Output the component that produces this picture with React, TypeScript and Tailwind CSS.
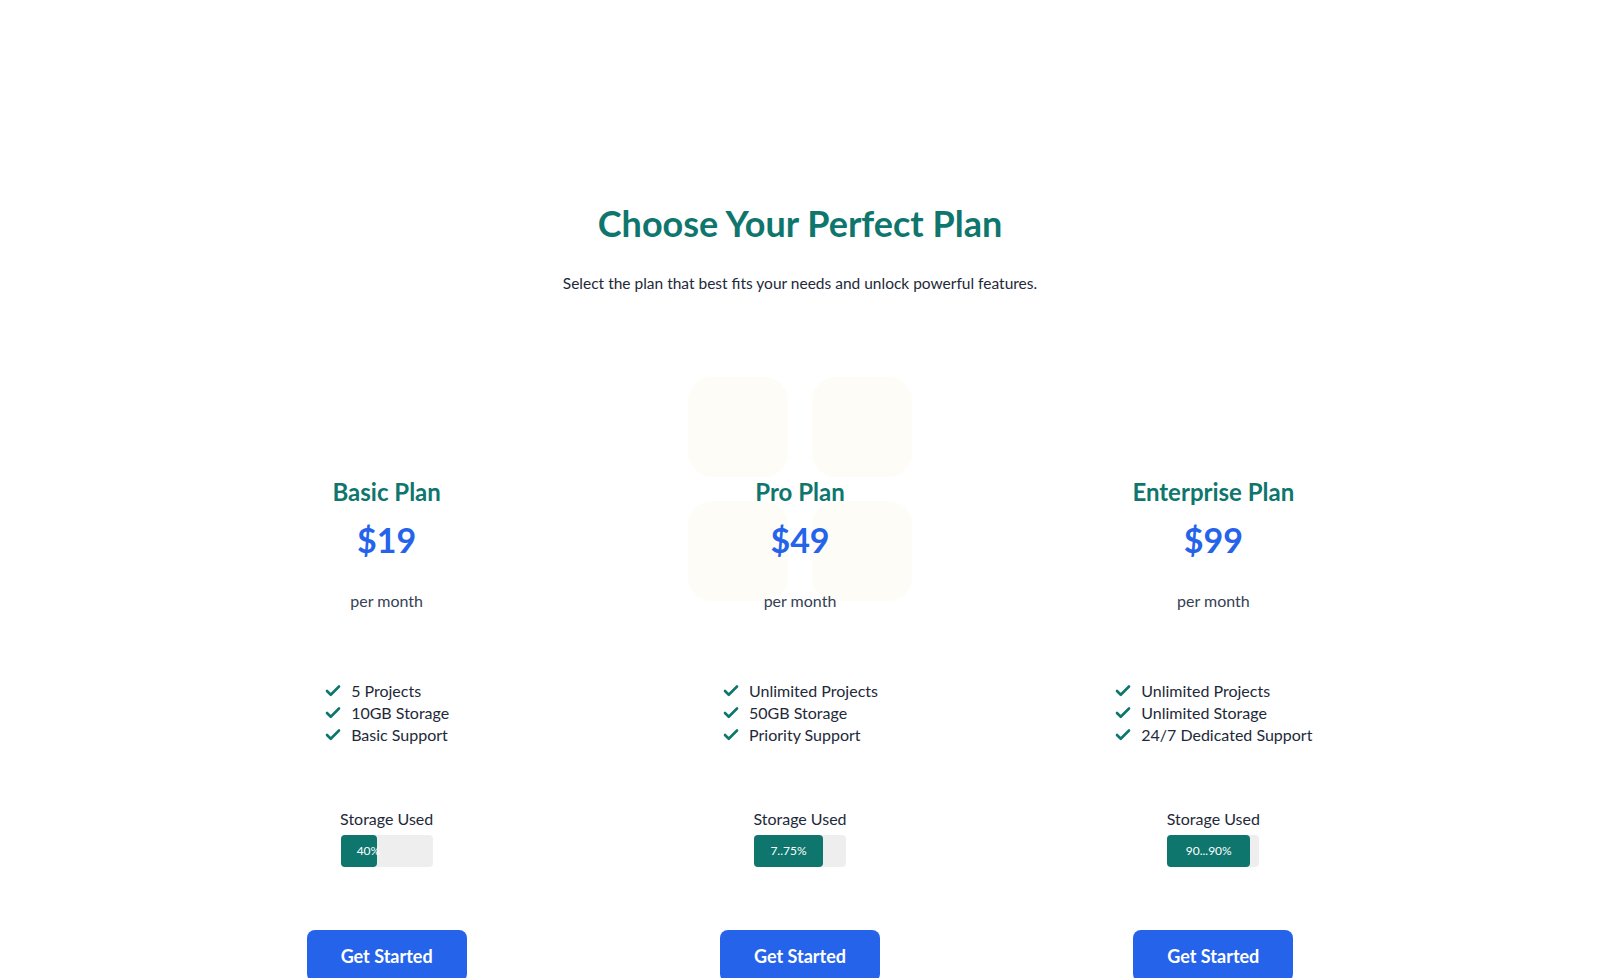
import React from "react";
import { Check } from "lucide-react";

type Plan = {
  name: string;
  price: string;
  features: string[];
  used: number;
  label: string;
  deco?: boolean;
};

const plans: Plan[] = [
  { name: "Basic Plan", price: "$19", features: ["5 Projects", "10GB Storage", "Basic Support"], used: 40, label: "40%" },
  { name: "Pro Plan", price: "$49", features: ["Unlimited Projects", "50GB Storage", "Priority Support"], used: 75, label: "7..75%", deco: true },
  { name: "Enterprise Plan", price: "$99", features: ["Unlimited Projects", "Unlimited Storage", "24/7 Dedicated Support"], used: 90, label: "90...90%" },
];

function Card({ plan }: { plan: Plan }) {
  return (
    <div className="relative flex flex-col items-center pt-[99px]">
      {plan.deco && (
        <div className="absolute top-0 left-0 right-0 mx-auto w-[224px] grid grid-cols-[100px_100px] gap-6">
          <div className="w-[100px] h-[100px] rounded-3xl bg-[#fdfcf6]" />
          <div className="w-[100px] h-[100px] rounded-3xl bg-[#fdfcf6]" />
          <div className="w-[100px] h-[100px] rounded-3xl bg-[#fdfcf6]" />
          <div className="w-[100px] h-[100px] rounded-3xl bg-[#fdfcf6]" />
        </div>
      )}
      <h2 className="relative text-2xl leading-8 font-bold text-[#0f766e]">{plan.name}</h2>
      <div className="relative mt-3 text-[34px] leading-10 font-bold text-[#2563eb]">{plan.price}</div>
      <div className="relative mt-[29px] text-base leading-6 text-gray-700">per month</div>
      <ul className="mt-[67px] flex flex-col">
        {plan.features.map((f) => (
          <li key={f} className="flex items-center gap-[9px] text-base leading-[22px] text-gray-800">
            <Check className="w-[18px] h-[18px] text-[#0f766e]" strokeWidth={3.5} />
            <span>{f}</span>
          </li>
        ))}
      </ul>
      <div className="mt-[61px] text-base leading-6 text-gray-800">Storage Used</div>
      <div className="mt-1 w-[92px] h-8 rounded bg-[#eeeeee]">
        <div
          className="h-8 rounded bg-[#0f766e] px-4 text-center text-xs leading-8 text-white whitespace-nowrap"
          style={{ width: `${plan.used}%` }}
        >
          {plan.label}
        </div>
      </div>
      <button className="mt-[63px] w-[160px] py-3 rounded-lg bg-[#2563eb] text-white text-lg leading-7 font-bold">
        Get Started
      </button>
    </div>
  );
}

export default function App() {
  return (
    <div className="min-h-screen bg-white font-['Lato',sans-serif] pb-16">
      <div className="pt-[203px] flex flex-col items-center">
        <h1 className="text-4xl leading-10 font-bold text-[#0f766e]">Choose Your Perfect Plan</h1>
        <p className="mt-7 text-[15.5px] leading-6 text-gray-800">
          Select the plan that best fits your needs and unlock powerful features.
        </p>
      </div>
      <div className="mx-auto mt-[82px] w-[1240px] grid grid-cols-3">
        {plans.map((p) => (
          <Card key={p.name} plan={p} />
        ))}
      </div>
    </div>
  );
}
